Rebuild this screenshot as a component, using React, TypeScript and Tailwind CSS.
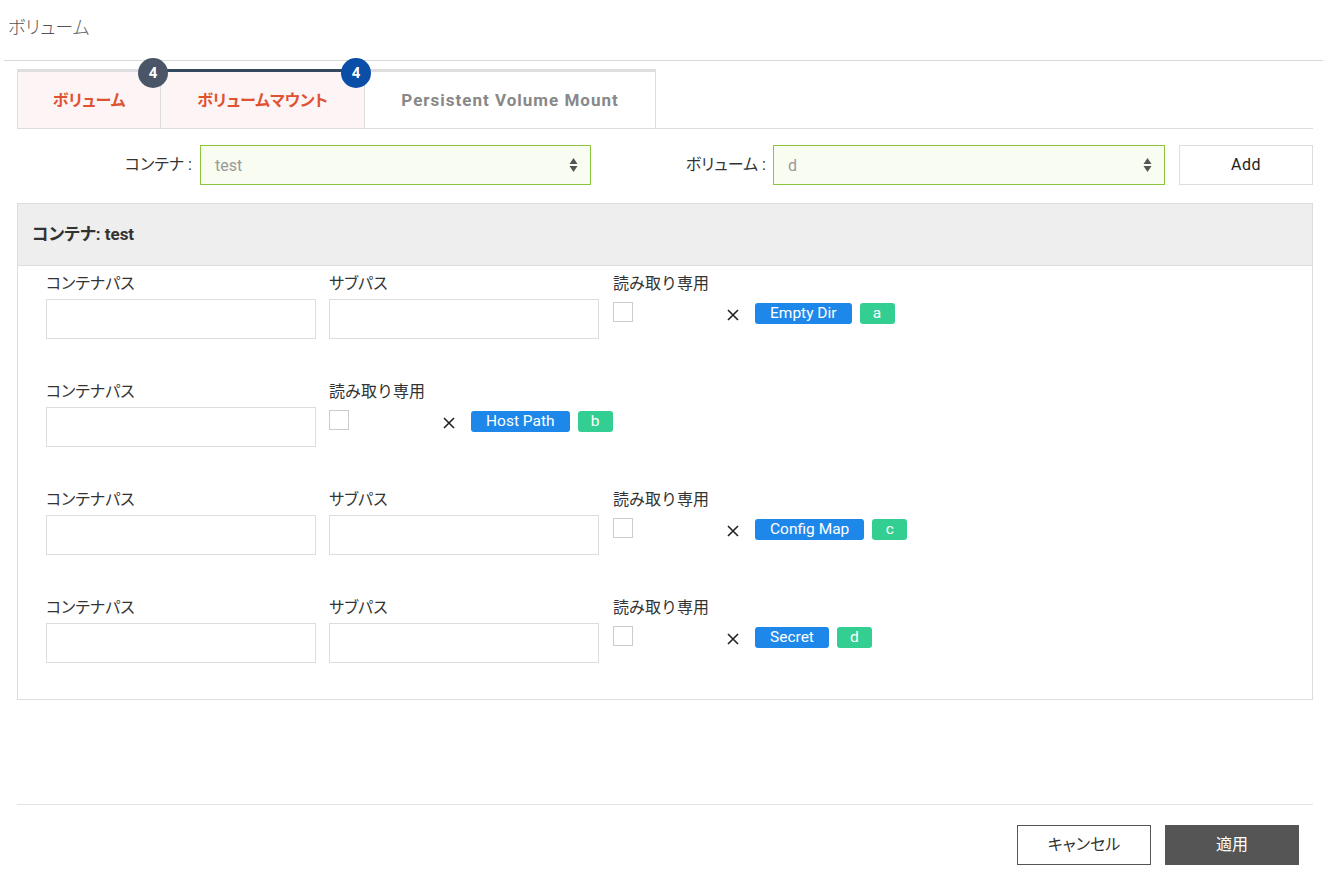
import React from "react";

const font = { fontFamily: "Roboto, 'Noto Sans CJK JP', sans-serif" };

function XIcon() {
  return (
    <svg width="12" height="12" viewBox="0 0 12 12" className="block">
      <path d="M1 1 L11 11 M11 1 L1 11" stroke="#222" strokeWidth="1.6" fill="none" />
    </svg>
  );
}

function SelectBox({ value, width }: { value: string; width: string }) {
  return (
    <div className={`${width} h-[40px] border border-[#8cc63f] bg-[#f9fdf1] flex items-center justify-between pl-[14px] pr-[12px]`}>
      <span className="text-[16px] text-[#999] pt-[2px]">{value}</span>
      <svg width="9" height="16" viewBox="0 0 9 16">
        <path d="M4.5 1 L8.5 7 L0.5 7 Z" fill="#555" />
        <path d="M4.5 15 L8.5 9 L0.5 9 Z" fill="#555" />
      </svg>
    </div>
  );
}

function Field({ label }: { label: string }) {
  return (
    <div className="w-[270px] shrink-0">
      <div className="h-[20px] leading-[20px] text-[16px] text-[#333] [font-feature-settings:'palt']">{label}</div>
      <div className="mt-[5px] h-[40px] border border-[#ddd] bg-white" />
    </div>
  );
}

function ReadOnly({ type, name }: { type: string; name: string }) {
  return (
    <div className="shrink-0">
      <div className="h-[20px] leading-[20px] text-[16px] text-[#333]">読み取り専用</div>
      <div className="mt-[5px] flex items-start">
        <div className="w-[114px] shrink-0 pt-[3px]">
          <div className="w-[20px] h-[20px] border border-[#ccc] bg-white" />
        </div>
        <div className="w-[28px] shrink-0 pt-[10px]">
          <XIcon />
        </div>
        <div className="flex gap-[8px] pt-[4px]">
          <span className="h-[21px] leading-[21px] px-[15px] rounded-[3px] bg-[#1e88ea] text-white text-[15.5px]">{type}</span>
          <span className="h-[21px] leading-[21px] w-[35px] text-center rounded-[3px] bg-[#33cf92] text-white text-[15.5px]">{name}</span>
        </div>
      </div>
    </div>
  );
}

export default function App() {
  const rows = [
    { sub: true, type: "Empty Dir", name: "a" },
    { sub: false, type: "Host Path", name: "b" },
    { sub: true, type: "Config Map", name: "c" },
    { sub: true, type: "Secret", name: "d" },
  ];
  return (
    <div className="w-[1327px] h-[876px] bg-white relative overflow-hidden" style={font}>
      <div className="h-[61px] mx-[4px] border-b border-[#d9d9d9] flex items-center pl-[4px] pb-[6px]">
        <span className="text-[18px] text-[#555] font-light [font-feature-settings:'palt']">ボリューム</span>
      </div>

      <div className="ml-[17px] mr-[14px]">
        {/* tabs */}
        <div className="relative mt-[8px] flex border-b border-[#ddd] h-[60px]">
          <div className="w-[144px] h-[59px] bg-[#fdf5f5] border-t-[3px] border-t-[#dedede] border-l border-l-[#ddd] border-r border-r-[#ddd] flex items-center justify-center pt-[2px]">
            <span className="text-[16px] font-bold text-[#df5333] [font-feature-settings:'palt']">ボリューム</span>
          </div>
          <div className="w-[204px] h-[59px] bg-[#fdf5f5] border-t-[3px] border-t-[#dedede] border-r border-r-[#ddd] flex items-center justify-center pt-[2px]">
            <span className="text-[16px] font-bold text-[#df5333] [font-feature-settings:'palt']">ボリュームマウント</span>
          </div>
          <div className="w-[291px] h-[59px] bg-white border-t-[3px] border-t-[#dedede] border-r border-r-[#ddd] flex items-center justify-center pt-[2px]">
            <span className="text-[17px] font-bold text-[#888] tracking-[1px]">Persistent Volume Mount</span>
          </div>
          <div className="absolute left-[136px] top-0 w-[203px] h-[3px] bg-[#34495e]" />
          <div className="absolute left-[121px] top-[-11px] w-[30px] h-[30px] rounded-full bg-[#4a5568] text-white text-[15px] font-bold flex items-center justify-center">4</div>
          <div className="absolute left-[324px] top-[-11px] w-[30px] h-[30px] rounded-full bg-[#0b4ea8] text-white text-[15px] font-bold flex items-center justify-center">4</div>
        </div>

        {/* selectors */}
        <div className="mt-[16px] flex items-center h-[40px]">
          <div className="w-[175px] text-right text-[16px] text-[#333] [font-feature-settings:'palt']">コンテナ :</div>
          <div className="ml-[8px]">
            <SelectBox value="test" width="w-[391px]" />
          </div>
          <div className="w-[175px] text-right text-[16px] text-[#333] [font-feature-settings:'palt']">ボリューム :</div>
          <div className="ml-[7px]">
            <SelectBox value="d" width="w-[392px]" />
          </div>
          <div className="ml-[14px] w-[134px] h-[40px] border border-[#ddd] bg-white flex items-center justify-center text-[16px] text-[#222] tracking-[0.5px]">Add</div>
        </div>

        {/* panel */}
        <div className="mt-[18px] border border-[#ddd]">
          <div className="h-[62px] bg-[#eeeeee] border-b border-[#ddd] flex items-center pl-[14px]">
            <span className="text-[17px] font-bold text-[#333] [font-feature-settings:'palt']">コンテナ: test</span>
          </div>
          <div className="pl-[28px] pt-[8px] pb-[36px] flex flex-col gap-[43px]">
            {rows.map((r, i) => (
              <div key={i} className="flex">
                <Field label="コンテナパス" />
                {r.sub && (
                  <div className="ml-[13px]">
                    <Field label="サブパス" />
                  </div>
                )}
                <div className={r.sub ? "ml-[14px]" : "ml-[13px]"}>
                  <ReadOnly type={r.type} name={r.name} />
                </div>
              </div>
            ))}
          </div>
        </div>

        {/* footer */}
        <div className="mt-[104px] border-t border-[#e3e3e3] pt-[20px] flex justify-end pr-[14px] gap-[14px]">
          <div className="w-[134px] h-[40px] border border-[#555] bg-white flex items-center justify-center text-[16px] text-[#333] [font-feature-settings:'palt']">キャンセル</div>
          <div className="w-[134px] h-[40px] bg-[#555] flex items-center justify-center text-[16px] text-white">適用</div>
        </div>
      </div>
    </div>
  );
}
